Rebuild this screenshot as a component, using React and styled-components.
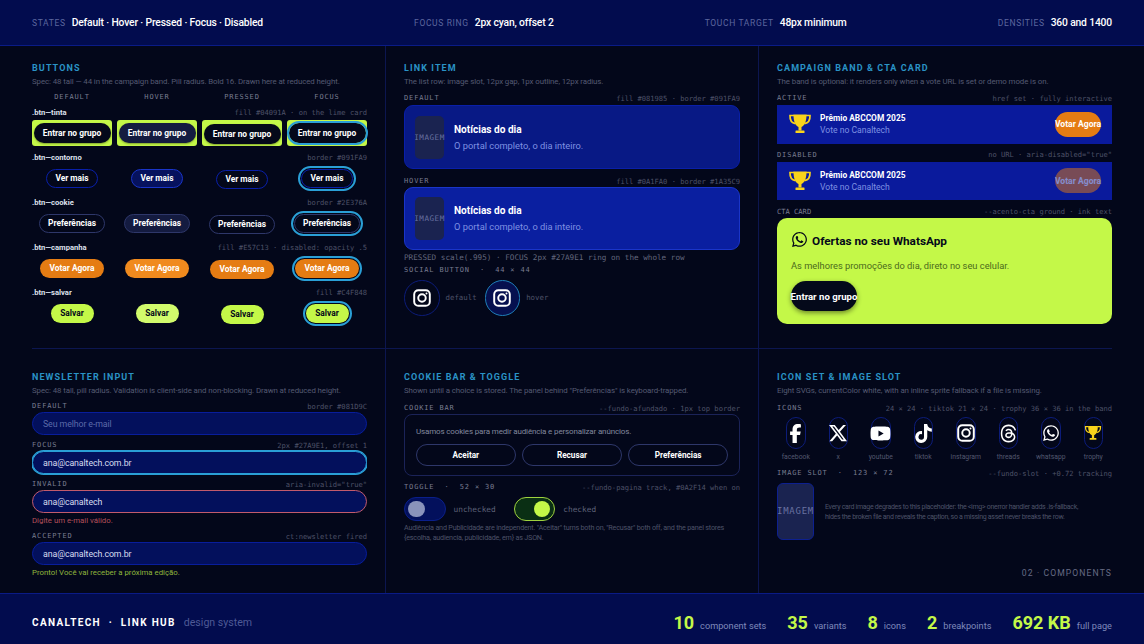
import React from 'react';
import styled, { createGlobalStyle, css } from 'styled-components';
import { FaFacebookF, FaXTwitter, FaYoutube, FaTiktok, FaThreads, FaWhatsapp } from 'react-icons/fa6';

const sans = `Roboto, "Liberation Sans", sans-serif`;
const mono = `"DejaVu Sans Mono", "Liberation Mono", monospace`;

const Global = createGlobalStyle`
  * { box-sizing: border-box; }
  html, body { margin: 0; padding: 0; background: #03071a; }
  body { font-family: ${sans}; color: #fff; }
`;

const Page = styled.div`
  width: 1144px;
  height: 644px;
  overflow: hidden;
  display: flex;
  flex-direction: column;
  background: #03071a;
`;

const TopBar = styled.header`
  height: 46px;
  flex: none;
  display: flex;
  align-items: center;
  justify-content: space-between;
  padding: 0 32px;
  background: #020c4e;
  border-bottom: 1px solid #0a1b86;
`;

const TopItem = styled.div`
  display: flex;
  align-items: center;
  gap: 6px;
`;

const TopKey = styled.span`
  font-size: 8.5px;
  letter-spacing: 0.65px;
  color: #5d679f;
`;

const TopVal = styled.span`
  font-size: 10.3px;
  letter-spacing: -0.15px;
  font-weight: 500;
  color: #fff;
`;

const Main = styled.main`
  flex: 1;
  display: grid;
  grid-template-columns: 354px 373px 1fr;
  grid-template-rows: 303px 1fr;
  padding: 0 32px;
  min-height: 0;
`;

const Cell = styled.section`
  display: flex;
  flex-direction: column;
  min-width: 0;
  padding-top: ${p => (p.$row === 1 ? 17 : 23)}px;
  padding-left: ${p => (p.$col === 1 ? 0 : 18)}px;
  padding-right: ${p => (p.$col === 3 ? 0 : 18)}px;
  border-right: ${p => (p.$col === 3 ? 'none' : '1px solid #0c1650')};
  border-bottom: ${p => (p.$row === 1 ? '1px solid #0c1650' : 'none')};
`;

const Heading = styled.h2`
  margin: 0;
  font-size: 9px;
  line-height: 11px;
  font-weight: 700;
  letter-spacing: 1.1px;
  color: #2a93c6;
  text-transform: uppercase;
`;

const Sub = styled.p`
  margin: 2px 0 0;
  font-size: 7.9px;
  letter-spacing: -0.1px;
  line-height: 11px;
  color: #555a72;
  white-space: nowrap;
`;

const Head = styled.div`
  display: flex;
  align-items: center;
  justify-content: space-between;
  height: 10px;
  margin-top: ${p => p.$top ?? 5}px;
  white-space: pre;
`;

const Label = styled.span`
  font-family: ${mono};
  font-size: 7px;
  letter-spacing: 0.85px;
  color: #787c90;
`;

const Note = styled.span`
  font-family: ${mono};
  font-size: 7.1px;
  color: #4e5268;
`;

const PlainLabel = styled(Note)`
  color: #787c90;
`;

/* buttons */
const StateGrid = styled.div`
  display: grid;
  grid-template-columns: repeat(4, 80px);
  gap: 5px;
  margin-top: ${p => p.$top ?? 0}px;
`;

const StateName = styled(Label)`
  text-align: center;
  line-height: 10px;
`;

const Variant = styled.div`
  margin-top: ${p => p.$top ?? 5}px;
`;

const VariantHead = styled.div`
  display: flex;
  align-items: center;
  justify-content: space-between;
  height: 12px;
`;

const VariantName = styled.span`
  font-size: 7.6px;
  font-weight: 700;
  color: #dfe2ee;
`;

const StateCell = styled.div`
  height: 26px;
  margin-top: 2px;
  display: flex;
  align-items: center;
  justify-content: center;
  border-radius: 3px;
  background: ${p => (p.$lime ? '#c4f848' : 'transparent')};
`;

const variantStyles = {
  tinta: css`
    width: 77px;
    height: 20px;
    background: ${p => (p.$state === 'hover' ? '#141c40' : '#04091a')};
    color: #fff;
    box-shadow: 0 1px 2px rgba(0, 0, 0, 0.35);
  `,
  contorno: css`
    width: 52px;
    height: 19px;
    background: ${p => (p.$state === 'hover' ? '#06125e' : 'transparent')};
    border: 1px solid ${p => (p.$state === 'hover' ? '#1a35c9' : '#091fa9')};
    color: #fff;
  `,
  cookie: css`
    width: 66px;
    height: 19px;
    background: ${p => (p.$state === 'hover' ? '#141b40' : 'transparent')};
    border: 1px solid #2e376a;
    color: #fff;
  `,
  campanha: css`
    width: 64px;
    height: 19px;
    background: ${p => (p.$state === 'hover' ? '#f08a1e' : '#e57c13')};
    color: #fff;
  `,
  salvar: css`
    width: 43px;
    height: 19px;
    background: ${p => (p.$state === 'hover' ? '#d2fb6c' : '#c4f848')};
    color: #04091a;
  `,
};

const Pill = styled.button`
  display: flex;
  align-items: center;
  justify-content: center;
  padding: 0;
  border: none;
  border-radius: 999px;
  font-family: ${sans};
  font-size: 8.4px;
  font-weight: 700;
  white-space: nowrap;
  ${p => variantStyles[p.$kind]}
  ${p => p.$state === 'pressed' && 'transform: translateY(1px);'}
  ${p => p.$state === 'focus' && css`
    outline: 2px solid #2a9fd6;
    outline-offset: ${p.$kind === 'tinta' ? 0 : 1}px;
  `}
`;

/* link item */
const LinkCard = styled.div`
  height: ${p => (p.$hover ? 63 : 64)}px;
  margin-top: ${p => (p.$hover ? 1 : 2)}px;
  display: flex;
  align-items: center;
  gap: 10px;
  padding: 0 10px;
  border-radius: 9px;
  background: ${p => (p.$hover ? '#0a1fa0' : '#081985')};
  border: 1px solid ${p => (p.$hover ? '#1a35c9' : '#091fa9')};
`;

const Slot = styled.div`
  flex: none;
  display: flex;
  align-items: center;
  justify-content: center;
  width: ${p => (p.$big ? 37 : 29)}px;
  height: ${p => (p.$big ? 57 : 43)}px;
  border-radius: ${p => (p.$big ? 6 : 5)}px;
  background: #1a2350;
  border: ${p => (p.$big ? '1px solid #0d2090' : 'none')};
  font-family: ${mono};
  font-size: ${p => (p.$big ? 9 : 7.6)}px;
  letter-spacing: ${p => (p.$big ? 0.72 : 0.5)}px;
  color: #6871a0;
  white-space: nowrap;
`;

const LinkText = styled.div`
  display: flex;
  flex-direction: column;
  gap: 3px;
`;

const LinkTitle = styled.span`
  font-size: 10.1px;
  line-height: 13px;
  font-weight: 700;
`;

const LinkSub = styled.span`
  font-size: 9.3px;
  line-height: 13px;
  color: #7f91e2;
`;

const PressNote = styled(Note)`
  display: block;
  margin-top: 2.5px;
  font-size: 7.65px;
  line-height: 10px;
  color: #62667c;
`;

const SocialRow = styled.div`
  display: flex;
  align-items: center;
  gap: 8px;
  margin-top: 5.5px;
`;

const Social = styled.div`
  display: flex;
  align-items: center;
  justify-content: center;
  width: 35.5px;
  height: 35.5px;
  border-radius: 50%;
  background: ${p => (p.$hover ? '#06104f' : 'transparent')};
  border: 1px solid ${p => (p.$hover ? '#1f7fb8' : '#0c1c7a')};
`;

const SocialLabel = styled(Note)`
  margin-left: -2px;
  font-size: 7.4px;
`;

/* campaign */
const Band = styled.div`
  height: 38.5px;
  margin-top: 2px;
  display: flex;
  align-items: center;
  padding: 0 11px;
  background: #0a1a9c;
`;

const BandText = styled.div`
  display: flex;
  flex-direction: column;
  gap: 2px;
  margin-left: 8px;
  flex: 1;
`;

const BandTitle = styled.span`
  font-size: 8.4px;
  line-height: 10px;
  font-weight: 700;
`;

const BandSub = styled.span`
  font-size: 8.6px;
  line-height: 10px;
  color: #7f91e2;
`;

const VoteButton = styled.div`
  flex: none;
  width: 46px;
  height: 25px;
  display: flex;
  align-items: center;
  justify-content: center;
  border-radius: 999px;
  background: #e57c13;
  font-size: 8.6px;
  font-weight: 700;
  white-space: nowrap;
  opacity: ${p => (p.$off ? 0.5 : 1)};
`;

const CtaCard = styled.div`
  height: 106px;
  margin-top: 2px;
  padding: 14.5px 14px 0;
  border-radius: 10px;
  background: #c4f848;
  color: #04091a;
`;

const CtaTitle = styled.div`
  display: flex;
  align-items: center;
  gap: 4px;
  height: 17px;
  font-size: 11.8px;
  font-weight: 700;
  svg { margin-top: -3px; }
`;

const CtaSub = styled.p`
  margin: 10.5px 0 0;
  font-size: 9.3px;
  line-height: 12px;
  color: #4b6a1c;
`;

const CtaButton = styled.div`
  width: 66px;
  height: 30px;
  margin-top: 9px;
  display: flex;
  align-items: center;
  justify-content: center;
  border-radius: 999px;
  background: #04091a;
  color: #fff;
  font-size: 9.6px;
  font-weight: 700;
  white-space: nowrap;
  box-shadow: 0 2px 5px rgba(0, 0, 0, 0.45);
`;

/* newsletter */
const FieldClip = styled.div`
  margin-top: 1px;
  clip-path: inset(-4px 0);
`;

const Input = styled.div`
  height: 23px;
  display: flex;
  align-items: center;
  padding: 0 10px;
  border-radius: 999px;
  background: #03105c;
  border: 1px solid ${p => (p.$bad ? '#c25a6c' : '#081d9c')};
  font-size: 8.8px;
  letter-spacing: -0.1px;
  color: ${p => (p.$empty ? '#5c6aa8' : '#d8dcf0')};
  ${p => p.$focus && 'border-color: #2a9fd6; box-shadow: 0 0 0 1px #2a9fd6;'}
`;

const Hint = styled.p`
  margin: 2px 0 0;
  font-size: 7.8px;
  line-height: 11px;
  color: ${p => (p.$ok ? '#8fb63c' : '#b4505a')};
`;

/* cookie */
const CookiePanel = styled.div`
  height: 61.5px;
  margin-top: 1px;
  padding: 11px 11px 0;
  border: 1px solid #1b2358;
  border-radius: 8px;
`;

const CookieText = styled.p`
  margin: 0;
  font-size: 8px;
  letter-spacing: -0.15px;
  line-height: 11px;
  color: #82879e;
`;

const CookieRow = styled.div`
  display: grid;
  grid-template-columns: repeat(3, 1fr);
  gap: 6.5px;
  margin-top: 7px;
`;

const CookieButton = styled.div`
  height: 22px;
  display: flex;
  align-items: center;
  justify-content: center;
  border: 1px solid #2e376a;
  border-radius: 999px;
  font-size: 8.2px;
  font-weight: 700;
`;

const ToggleRow = styled.div`
  display: flex;
  align-items: center;
  margin-top: 5px;
`;

const Toggle = styled.div`
  flex: none;
  width: 41.5px;
  height: 24px;
  display: flex;
  align-items: center;
  justify-content: ${p => (p.$on ? 'flex-end' : 'flex-start')};
  padding: ${p => (p.$on ? '0 4px' : '0 3px')};
  border-radius: 999px;
  background: ${p => (p.$on ? '#0a2f14' : '#03105c')};
  border: ${p => (p.$on ? '1.5px solid #9fd23f' : '1px solid #0a1f8a')};
`;

const Knob = styled.span`
  width: 16.5px;
  height: 16.5px;
  border-radius: 50%;
  background: ${p => (p.$on ? '#c4f848' : '#8a93bb')};
`;

const ToggleLabel = styled(Note)`
  font-size: 7.8px;
  margin-left: 8px;
  margin-right: ${p => p.$gap ?? 0}px;
  color: #5e6278;
`;

const SmallPrint = styled.p`
  margin: 2px 0 0;
  font-size: 7.2px;
  letter-spacing: -0.2px;
  line-height: 10.2px;
  color: #4d5268;
  white-space: nowrap;
`;

/* icons */
const IconGrid = styled.div`
  display: grid;
  grid-template-columns: repeat(8, 37.5px);
  gap: 5px;
  margin-top: 4px;
`;

const IconCell = styled.div`
  display: flex;
  flex-direction: column;
  align-items: center;
  gap: 3px;
`;

const IconPill = styled.div`
  width: 19.5px;
  height: 32px;
  display: flex;
  align-items: center;
  justify-content: center;
  border: 1px solid #0c1c7a;
  border-radius: 10px;
  color: #fff;
  svg { flex: none; }
`;

const IconName = styled.span`
  font-size: 6.8px;
  line-height: 10px;
  color: #53586f;
`;

const SlotRow = styled.div`
  display: flex;
  gap: 11px;
  margin-top: 4.5px;
`;

const SlotText = styled.p`
  margin: 19px 0 0;
  font-size: 7px;
  letter-spacing: -0.3px;
  line-height: 10.2px;
  color: #4d5268;
  white-space: nowrap;
`;

const Corner = styled.div`
  margin-top: auto;
  padding-bottom: 14px;
  text-align: right;
  font-size: 8.6px;
  line-height: 11px;
  letter-spacing: 1.1px;
  color: #666b85;
`;

/* footer */
const BottomBar = styled.footer`
  height: 51px;
  flex: none;
  display: flex;
  align-items: center;
  justify-content: space-between;
  padding: 6px 32px 0;
  background: #020c4e;
  border-top: 1px solid #0a1b86;
`;

const Brand = styled.div`
  display: flex;
  align-items: baseline;
  gap: 8px;
`;

const BrandName = styled.span`
  font-size: 10px;
  font-weight: 700;
  letter-spacing: 1.35px;
  white-space: pre;
`;

const BrandSub = styled.span`
  font-size: 10.6px;
  color: #4e5a96;
`;

const Stats = styled.div`
  display: flex;
  align-items: baseline;
  gap: 21px;
`;

const Stat = styled.div`
  display: flex;
  align-items: baseline;
  gap: 6px;
`;

const StatNum = styled.span`
  font-size: 18px;
  font-weight: 700;
  color: #c4f848;
`;

const StatLabel = styled.span`
  font-size: 9.2px;
  color: #7f89ba;
`;

const Instagram = ({ size = 18, color = '#fff' }) => (
  <svg width={size} height={size} viewBox="0 0 24 24" fill="none" stroke={color} strokeWidth="2.6">
    <rect x="1.6" y="1.6" width="20.8" height="20.8" rx="5.5" />
    <circle cx="12" cy="12" r="5" />
    <circle cx="18" cy="6" r="1.3" fill={color} stroke="none" />
  </svg>
);

const Trophy = ({ size = 24 }) => (
  <svg width={size} height={size} viewBox="0 0 24 24" fill="none">
    <path d="M6 3.5H2C1.8 8 3.6 11 7.500 11.600M18 3.500h4c.2 4.500-1.600 7.500-5.500 8.100" stroke="#f9d31b" strokeWidth="1.7" />
    <path d="M5.500 2.500h13c0 6.500-1.500 10.800-5 12.500v3.500h-3V15c-3.500-1.700-5-6-5-12.500z" fill="#f9d31b" />
    <rect x="7.500" y="18.500" width="9" height="2.600" rx=".4" fill="#f9d31b" />
  </svg>
);

const STATES = ['default', 'hover', 'pressed', 'focus'];

const BUTTONS = [
  { kind: 'tinta', name: '.btn—tinta', note: 'fill #04091A · on the lime card', text: 'Entrar no grupo', lime: true },
  { kind: 'contorno', name: '.btn—contorno', note: 'border #091FA9', text: 'Ver mais' },
  { kind: 'cookie', name: '.btn—cookie', note: 'border #2E376A', text: 'Preferências' },
  { kind: 'campanha', name: '.btn—campanha', note: 'fill #E57C13 · disabled: opacity .5', text: 'Votar Agora' },
  { kind: 'salvar', name: '.btn—salvar', note: 'fill #C4F848', text: 'Salvar' },
];

const ICONS = [
  { name: 'facebook', icon: <FaFacebookF size={19} /> },
  { name: 'x', icon: <FaXTwitter size={20} /> },
  { name: 'youtube', icon: <FaYoutube size={21} /> },
  { name: 'tiktok', icon: <FaTiktok size={19} /> },
  { name: 'instagram', icon: <Instagram size={18} /> },
  { name: 'threads', icon: <FaThreads size={19} /> },
  { name: 'whatsapp', icon: <FaWhatsapp size={18} /> },
  { name: 'trophy', icon: <Trophy size={18} /> },
];

const TOP = [
  ['STATES', 'Default · Hover · Pressed · Focus · Disabled'],
  ['FOCUS RING', '2px cyan, offset 2'],
  ['TOUCH TARGET', '48px minimum'],
  ['DENSITIES', '360 and 1400'],
];

const STATS = [
  ['10', 'component sets'],
  ['35', 'variants'],
  ['8', 'icons'],
  ['2', 'breakpoints'],
  ['692 KB', 'full page'],
];

function LinkRow({ hover }) {
  return (
    <LinkCard $hover={hover}>
      <Slot>IMAGEM</Slot>
      <LinkText>
        <LinkTitle>Notícias do dia</LinkTitle>
        <LinkSub>O portal completo, o dia inteiro.</LinkSub>
      </LinkText>
    </LinkCard>
  );
}

function CampaignBand({ off }) {
  return (
    <Band>
      <Trophy size={24} />
      <BandText>
        <BandTitle>Prêmio ABCCOM 2025</BandTitle>
        <BandSub>Vote no Canaltech</BandSub>
      </BandText>
      <VoteButton $off={off}>Votar Agora</VoteButton>
    </Band>
  );
}

export default function App() {
  return (
    <Page>
      <Global />
      <TopBar>
        {TOP.map(([k, v]) => (
          <TopItem key={k}>
            <TopKey>{k}</TopKey>
            <TopVal>{v}</TopVal>
          </TopItem>
        ))}
      </TopBar>

      <Main>
        <Cell $row={1} $col={1}>
          <Heading>Buttons</Heading>
          <Sub>Spec: 48 tall — 44 in the campaign band. Pill radius. Bold 16. Drawn here at reduced height.</Sub>
          <StateGrid $top={5}>
            {STATES.map(s => <StateName key={s}>{s.toUpperCase()}</StateName>)}
          </StateGrid>
          {BUTTONS.map((b, i) => (
            <Variant key={b.kind} $top={i === 0 ? 4 : 5}>
              <VariantHead>
                <VariantName>{b.name}</VariantName>
                <Note>{b.note}</Note>
              </VariantHead>
              <StateGrid>
                {STATES.map(s => (
                  <StateCell key={s} $lime={b.lime}>
                    <Pill $kind={b.kind} $state={s}>{b.text}</Pill>
                  </StateCell>
                ))}
              </StateGrid>
            </Variant>
          ))}
        </Cell>

        <Cell $row={1} $col={2}>
          <Heading>Link item</Heading>
          <Sub>The list row: image slot, 12px gap, 1px outline, 12px radius.</Sub>
          <Head $top={6}><Label>DEFAULT</Label><Note>fill #081985 · border #091FA9</Note></Head>
          <LinkRow />
          <Head $top={7}><Label>HOVER</Label><Note>fill #0A1FA0 · border #1A35C9</Note></Head>
          <LinkRow hover />
          <PressNote>PRESSED scale(.995) · FOCUS 2px #27A9E1 ring on the whole row</PressNote>
          <Head $top={2}><Label>SOCIAL BUTTON  ·  44 × 44</Label></Head>
          <SocialRow>
            <Social><Instagram /></Social>
            <SocialLabel>default</SocialLabel>
            <Social $hover><Instagram /></Social>
            <SocialLabel>hover</SocialLabel>
          </SocialRow>
        </Cell>

        <Cell $row={1} $col={3}>
          <Heading>Campaign band &amp; CTA card</Heading>
          <Sub>The band is optional: it renders only when a vote URL is set or demo mode is on.</Sub>
          <Head $top={6}><Label>ACTIVE</Label><Note>href set · fully interactive</Note></Head>
          <CampaignBand />
          <Head $top={6}><Label>DISABLED</Label><Note>no URL · aria-disabled="true"</Note></Head>
          <CampaignBand off />
          <Head $top={6}><PlainLabel>CTA CARD</PlainLabel><Note>--acento-cta ground · ink text</Note></Head>
          <CtaCard>
            <CtaTitle><FaWhatsapp size={17} />Ofertas no seu WhatsApp</CtaTitle>
            <CtaSub>As melhores promoções do dia, direto no seu celular.</CtaSub>
            <CtaButton>Entrar no grupo</CtaButton>
          </CtaCard>
        </Cell>

        <Cell $row={2} $col={1}>
          <Heading>Newsletter input</Heading>
          <Sub>Spec: 48 tall, pill radius. Validation is client-side and non-blocking. Drawn at reduced height.</Sub>
          <Head $top={5}><Label>DEFAULT</Label><Note>border #081D9C</Note></Head>
          <FieldClip><Input $empty>Seu melhor e-mail</Input></FieldClip>
          <Head $top={5}><Label>FOCUS</Label><Note>2px #27A9E1, offset 1</Note></Head>
          <FieldClip><Input $focus>ana@canaltech.com.br</Input></FieldClip>
          <Head $top={5}><Label>INVALID</Label><Note>aria-invalid="true"</Note></Head>
          <FieldClip><Input $bad>ana@canaltech</Input></FieldClip>
          <Hint>Digite um e-mail válido.</Hint>
          <Head $top={5}><Label>ACCEPTED</Label><Note>ct:newsletter fired</Note></Head>
          <FieldClip><Input>ana@canaltech.com.br</Input></FieldClip>
          <Hint $ok>Pronto! Você vai receber a próxima edição.</Hint>
        </Cell>

        <Cell $row={2} $col={2}>
          <Heading>Cookie bar &amp; toggle</Heading>
          <Sub>Shown until a choice is stored. The panel behind "Preferências" is keyboard-trapped.</Sub>
          <Head $top={7}><Label>COOKIE BAR</Label><Note>--fundo-afundado · 1px top border</Note></Head>
          <CookiePanel>
            <CookieText>Usamos cookies para medir audiência e personalizar anúncios.</CookieText>
            <CookieRow>
              <CookieButton>Aceitar</CookieButton>
              <CookieButton>Recusar</CookieButton>
              <CookieButton>Preferências</CookieButton>
            </CookieRow>
          </CookiePanel>
          <Head $top={6.5}><Label>TOGGLE  ·  52 × 30</Label><Note>--fundo-pagina track, #0A2F14 when on</Note></Head>
          <ToggleRow>
            <Toggle><Knob /></Toggle>
            <ToggleLabel $gap={18}>unchecked</ToggleLabel>
            <Toggle $on><Knob $on /></Toggle>
            <ToggleLabel>checked</ToggleLabel>
          </ToggleRow>
          <SmallPrint>
            Audiência and Publicidade are independent. "Aceitar" turns both on, "Recusar" both off, and the panel stores<br />
            {'{escolha, audiencia, publicidade, em} as JSON.'}
          </SmallPrint>
        </Cell>

        <Cell $row={2} $col={3}>
          <Heading>Icon set &amp; image slot</Heading>
          <Sub>Eight SVGs, currentColor white, with an inline sprite fallback if a file is missing.</Sub>
          <Head $top={7}><Label>ICONS</Label><Note>24 × 24 · tiktok 21 × 24 · trophy 36 × 36 in the band</Note></Head>
          <IconGrid>
            {ICONS.map(i => (
              <IconCell key={i.name}>
                <IconPill>{i.icon}</IconPill>
                <IconName>{i.name}</IconName>
              </IconCell>
            ))}
          </IconGrid>
          <Head $top={6}><Label>IMAGE SLOT  ·  123 × 72</Label><Note>--fundo-slot · +0.72 tracking</Note></Head>
          <SlotRow>
            <Slot $big>IMAGEM</Slot>
            <SlotText>
              Every card image degrades to this placeholder: the &lt;img&gt; onerror handler adds .is-fallback,<br />
              hides the broken file and reveals the caption, so a missing asset never breaks the row.
            </SlotText>
          </SlotRow>
          <Corner>02 · COMPONENTS</Corner>
        </Cell>
      </Main>

      <BottomBar>
        <Brand>
          <BrandName>CANALTECH  ·  LINK HUB</BrandName>
          <BrandSub>design system</BrandSub>
        </Brand>
        <Stats>
          {STATS.map(([n, l]) => (
            <Stat key={l}>
              <StatNum>{n}</StatNum>
              <StatLabel>{l}</StatLabel>
            </Stat>
          ))}
        </Stats>
      </BottomBar>
    </Page>
  );
}
